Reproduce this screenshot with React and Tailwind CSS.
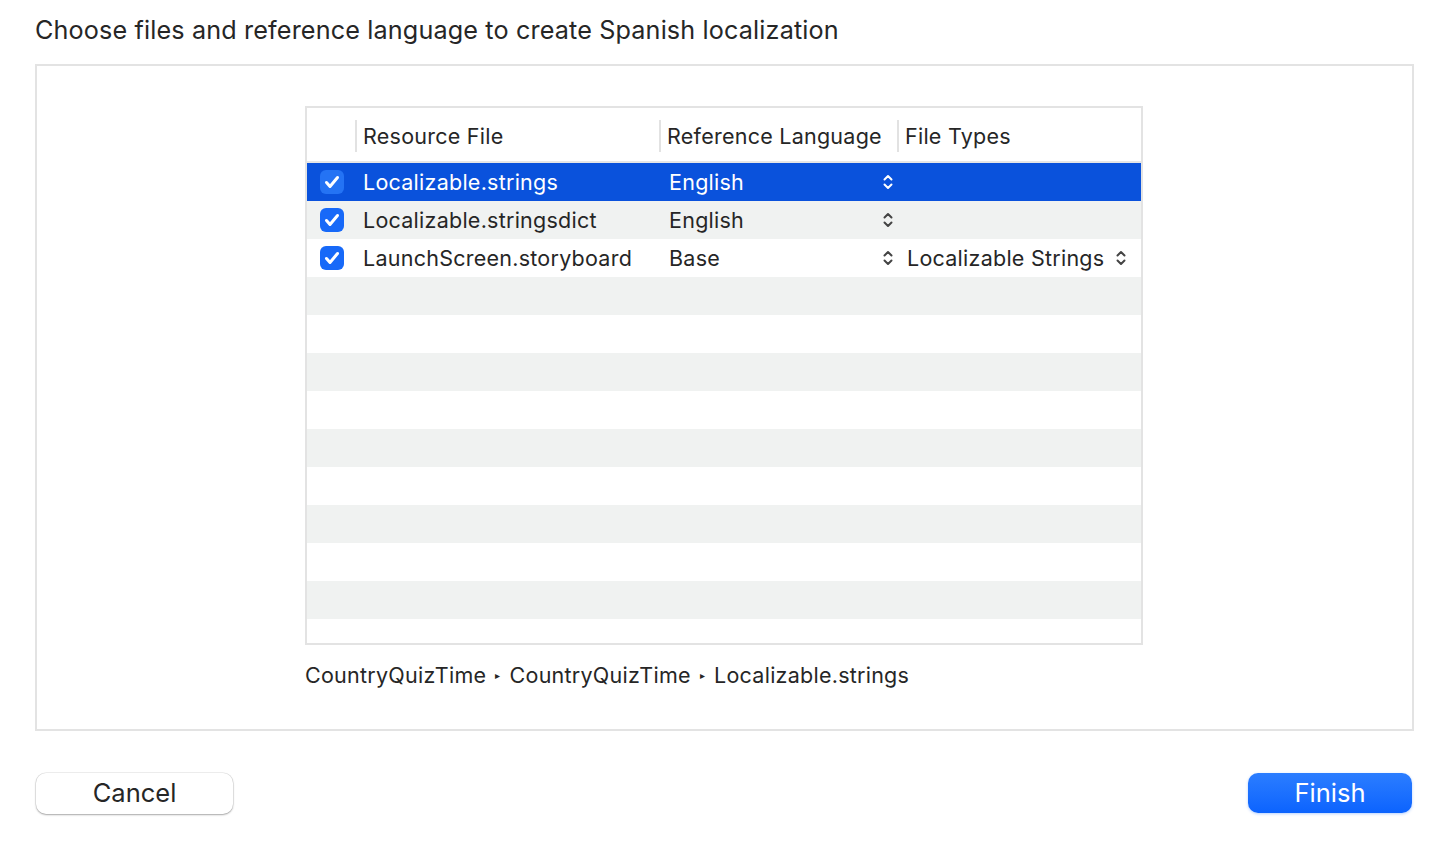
const rows = [
  { name: 'Localizable.strings', lang: 'English', type: null, selected: true },
  { name: 'Localizable.stringsdict', lang: 'English', type: null },
  { name: 'LaunchScreen.storyboard', lang: 'Base', type: 'Localizable Strings' },
];

function UpDown({ className }) {
  return (
    <svg width="12" height="18" viewBox="0 0 12 18" fill="none" className={className}>
      <path d="M2.5 6.5 L6 3 L9.5 6.5" stroke="currentColor" strokeWidth="2" strokeLinecap="round" strokeLinejoin="round" />
      <path d="M2.5 11.5 L6 15 L9.5 11.5" stroke="currentColor" strokeWidth="2" strokeLinecap="round" strokeLinejoin="round" />
    </svg>
  );
}

function Check({ selected }) {
  return (
    <div className={`w-6 h-6 rounded-[6px] flex items-center justify-center ${selected ? 'bg-[#2473f4]' : 'bg-[#1769f8]'}`}>
      <svg width="24" height="24" viewBox="0 0 24 24" fill="none">
        <path d="M6.5 12.5 L10 16.5 L17.5 7.5" stroke="white" strokeWidth="3" strokeLinecap="round" strokeLinejoin="round" />
      </svg>
    </div>
  );
}

export default function App() {
  const filler = Array.from({ length: 10 });

  return (
    <div className="w-[1444px] h-[851px] bg-white text-[#262626] overflow-hidden" style={{ fontFamily: 'Inter, "Noto Sans", sans-serif' }}>
      <h1 className="pl-[35px] pt-[14px] h-[64px] text-[25.2px] leading-[32px] tracking-[0.14px]">
        Choose files and reference language to create Spanish localization
      </h1>

      {/* Main box */}
      <div className="ml-[35px] w-[1379px] h-[667px] border-2 border-[#e3e3e3] pt-[40px] pl-[268px] text-[21.5px] tracking-[0.25px]">
        <div className="w-[838px] h-[539px] border-2 border-[#e3e3e3] overflow-hidden">
          {/* Header */}
          <div className="flex h-[55px] items-center pt-[3px] border-b-2 border-[#e6e6e6]">
            <div className="w-[50px] h-[32px] border-r-2 border-[#e2e2e2]" />
            <div className="w-[304px] h-[32px] flex items-center pl-[6px] border-r-2 border-[#e2e2e2]">Resource File</div>
            <div className="w-[238px] h-[32px] flex items-center pl-[6px] border-r-2 border-[#e2e2e2]">Reference Language</div>
            <div className="flex-1 h-[32px] flex items-center pl-[6px]">File Types</div>
          </div>

          {rows.map((r, i) => (
            <div
              key={r.name}
              className={`flex h-[38px] items-center ${
                r.selected ? 'bg-[#0a52dc] text-white' : i % 2 === 1 ? 'bg-[#f0f2f1]' : 'bg-white'
              }`}
            >
              <div className="w-[50px] pl-[13px]">
                <Check selected={r.selected} />
              </div>
              <div className="w-[304px] pl-[6px]">{r.name}</div>
              <div className="w-[238px] pl-[8px] flex items-center justify-between pr-[5px]">
                <span>{r.lang}</span>
                <UpDown className={r.selected ? 'text-white' : 'text-[#444]'} />
              </div>
              <div className="flex-1 pl-[8px] flex items-center justify-between pr-[14px]">
                {r.type && (
                  <>
                    <span>{r.type}</span>
                    <UpDown className="text-[#444]" />
                  </>
                )}
              </div>
            </div>
          ))}

          {filler.map((_, i) => (
            <div key={i} className={`h-[38px] ${i % 2 === 0 ? 'bg-[#f0f2f1]' : 'bg-white'}`} />
          ))}
        </div>

        <div className="mt-[14px] flex items-center text-[#262626]">
          <span>CountryQuizTime</span>
          <span className="mx-[9px] text-[10px]">▸</span>
          <span>CountryQuizTime</span>
          <span className="mx-[9px] text-[10px]">▸</span>
          <span>Localizable.strings</span>
        </div>
      </div>

      {/* Buttons */}
      <div className="flex justify-between pl-[36px] pr-[32px] pt-[42px]">
        <button className="w-[197px] h-[41px] rounded-[10px] bg-white text-[25.5px] text-[#262626] shadow-[0_1px_2px_rgba(0,0,0,0.3),0_0_0_0.5px_rgba(0,0,0,0.12)]">
          Cancel
        </button>
        <button className="w-[164px] h-[40px] rounded-[10px] bg-gradient-to-b from-[#2b7dff] to-[#0b63fe] text-[25.5px] text-white shadow-[0_1px_3px_rgba(10,100,255,0.3)]">
          Finish
        </button>
      </div>
    </div>
  );
}
